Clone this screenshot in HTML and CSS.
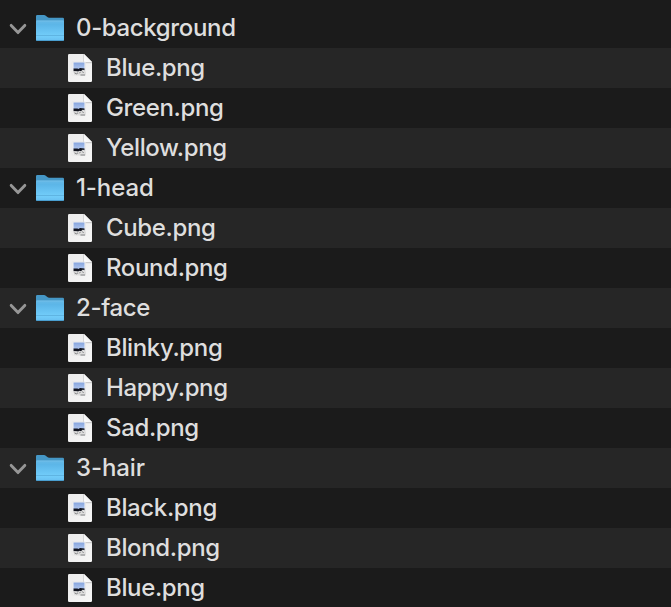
FILE: index.html
```
<!DOCTYPE html>
<html lang="en">
<head>
<meta charset="utf-8">
<title>Files</title>
<link rel="stylesheet" href="styles.css">
</head>
<body>
<svg class="defs" width="0" height="0" aria-hidden="true">
  <defs>
    <linearGradient id="front" x1="0" y1="0" x2="0" y2="1"><stop offset="0" stop-color="#66b9e6"/><stop offset="0.2" stop-color="#5cb6e8"/><stop offset="0.75" stop-color="#72cdfa"/><stop offset="1" stop-color="#68bff0"/></linearGradient>
    <linearGradient id="paper" x1="0" y1="0" x2="1" y2="1"><stop offset="0" stop-color="#ececec"/><stop offset="1" stop-color="#f6f6f6"/></linearGradient>
    <linearGradient id="fold" x1="0" y1="1" x2="1" y2="0"><stop offset="0" stop-color="#ffffff"/><stop offset="1" stop-color="#ececec"/></linearGradient>
    <linearGradient id="sky" x1="0" y1="0" x2="0" y2="1"><stop offset="0" stop-color="#86a5de"/><stop offset="1" stop-color="#b0c6ee"/></linearGradient>
  </defs>
  <symbol id="chevron" viewBox="0 0 20 14"><path d="M3.200 3.400 10 10.600l6.800-7.200" fill="none" stroke="#969696" stroke-width="2.900" stroke-linecap="round" stroke-linejoin="round"/></symbol>
  <symbol id="folder" viewBox="0 0 30 28">
    <path d="M1 2.200Q1 1 2.200 1H9q1 0 1.800.8l1.500 1.300q.8.600 1.800.600h13.700Q29 3.700 29 4.900V25H1z" fill="#4597c6"/>
    <path d="M1 7.500q0-1 1-1h26q1 0 1 1v18.300q0 1.200-1.200 1.200H2.200Q1 27 1 25.800z" fill="url(#front)"/>
    <path d="M1.500 7h27" stroke="#7cc5eb" stroke-width=".6"/>
    <path d="M1 21.500h28" stroke="#57a9d8" stroke-width=".7"/>
    <path d="M1 25.700q0 1.300 1.200 1.300h25.600q1.200 0 1.200-1.300v.5H1z" fill="#3f93c4"/>
  </symbol>
  <symbol id="image" viewBox="0 0 24 28">
    <path d="M1.200 0H16L24 8V26.800Q24 28 22.800 28H1.200Q0 28 0 26.800V1.200Q0 0 1.200 0z" fill="url(#paper)"/>
    <path d="M15.300 0H16v8h8v1.200h-7.200q-1.500 0-1.500-1.500z" fill="#cdcdcd"/>
    <path d="M16 0v7q0 1 1 1h7z" fill="url(#fold)"/>
    <path d="M4.200 8h13.300v13H4.200z" fill="#f8f8f8" stroke="#dedede" stroke-width=".5"/>
    <path d="M5.500 8.500h11V15h-11z" fill="url(#sky)"/>
    <path d="M5.500 14.500h4l1 .5 1.500-1 4.500.5v3h-11z" fill="#11141e"/>
    <path d="M4.700 17.200h3.500l1.800.8 1.500-1.200 1.500.5 1.500-1.500 2 .3 1.500 2.500-.5 2.800-5 .2-6.300-.6z" fill="#dedede"/>
    <path d="m6.500 18.800 1.800 1.100 1.700-1.100M11.300 19.300l1.300-1.500M14.500 17.500l1 1.500M12.500 21h4.500" fill="none" stroke="#77787b" stroke-width=".9"/>
  </symbol>
</svg>
<main class="tree">
  <div class="row folder"><svg class="chevron"><use href="#chevron"/></svg><svg class="folder-icon"><use href="#folder"/></svg><span>0-background</span></div>
  <div class="row file"><svg class="file-icon"><use href="#image"/></svg><span>Blue.png</span></div>
  <div class="row file"><svg class="file-icon"><use href="#image"/></svg><span>Green.png</span></div>
  <div class="row file"><svg class="file-icon"><use href="#image"/></svg><span>Yellow.png</span></div>
  <div class="row folder"><svg class="chevron"><use href="#chevron"/></svg><svg class="folder-icon"><use href="#folder"/></svg><span class="loose">1-head</span></div>
  <div class="row file"><svg class="file-icon"><use href="#image"/></svg><span>Cube.png</span></div>
  <div class="row file"><svg class="file-icon"><use href="#image"/></svg><span>Round.png</span></div>
  <div class="row folder"><svg class="chevron"><use href="#chevron"/></svg><svg class="folder-icon"><use href="#folder"/></svg><span>2-face</span></div>
  <div class="row file"><svg class="file-icon"><use href="#image"/></svg><span>Blinky.png</span></div>
  <div class="row file"><svg class="file-icon"><use href="#image"/></svg><span>Happy.png</span></div>
  <div class="row file"><svg class="file-icon"><use href="#image"/></svg><span>Sad.png</span></div>
  <div class="row folder"><svg class="chevron"><use href="#chevron"/></svg><svg class="folder-icon"><use href="#folder"/></svg><span class="loose">3-hair</span></div>
  <div class="row file"><svg class="file-icon"><use href="#image"/></svg><span>Black.png</span></div>
  <div class="row file"><svg class="file-icon"><use href="#image"/></svg><span>Blond.png</span></div>
  <div class="row file"><svg class="file-icon"><use href="#image"/></svg><span>Blue.png</span></div>
</main>
</body>
</html>
```
FILE: styles.css
```
body {
  margin: 0;
  background: #1b1b1b;
  color: #dedede;
  font: 450 24px/40px Inter, "Liberation Sans", sans-serif;
  letter-spacing: -0.36px;
}
.loose { letter-spacing: -0.1px; }
.defs { display: block; }
.tree {
  box-sizing: border-box;
  height: 607px;
  padding-top: 8px;
  overflow: hidden;
}
.row {
  display: flex;
  align-items: center;
  height: 40px;
  white-space: nowrap;
}
.row:nth-child(even) { background: #262626; }
.folder { padding-left: 8px; }
.file { padding-left: 68px; }
.chevron { width: 20px; height: 14px; margin: 2px 7px 0 0; }
.folder-icon { width: 30px; height: 28px; margin-right: 11px; }
.file-icon { width: 24px; height: 28px; margin-right: 14px; }
```
